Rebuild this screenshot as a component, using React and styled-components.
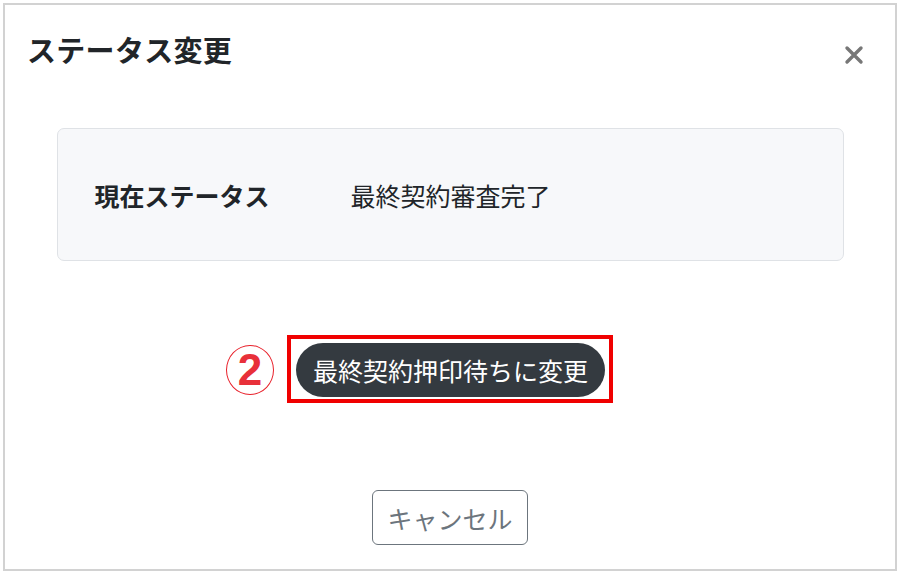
import React from "react";
import styled, { createGlobalStyle } from "styled-components";

const GlobalStyle = createGlobalStyle`
  html, body {
    margin: 0;
    padding: 0;
    background: #fff;
  }
  body {
    font-family: "Noto Sans CJK JP", "Noto Sans", sans-serif;
    color: #212529;
  }
`;

const Page = styled.div`
  width: 901px;
  height: 574px;
  box-sizing: border-box;
  padding: 3px 4px 3px 3px;
`;

const Modal = styled.div`
  height: 100%;
  box-sizing: border-box;
  border: 2px solid #d2d2d2;
  display: flex;
  flex-direction: column;
  align-items: center;
`;

const Header = styled.div`
  align-self: stretch;
  display: flex;
  justify-content: space-between;
  align-items: flex-start;
  padding: 24px 30px 0 22px;
`;

const Title = styled.h1`
  margin: 0;
  font-size: 29px;
  line-height: 40px;
  font-weight: 700;
  color: #212529;
  letter-spacing: 0.3px;
`;

const Close = styled.button`
  border: none;
  background: none;
  padding: 0;
  margin-top: 15px;
  width: 22px;
  height: 22px;
  cursor: pointer;
  display: flex;
  align-items: center;
  justify-content: center;
`;

const StatusBox = styled.div`
  margin-top: 59px;
  width: 787px;
  height: 133px;
  box-sizing: border-box;
  background: #f7f8fa;
  border: 1px solid #dfe2e6;
  border-radius: 7px;
  display: flex;
  align-items: center;
  padding-left: 37px;
  font-size: 25px;
`;

const Label = styled.span`
  width: 256px;
  font-weight: 700;
  color: #212529;
`;

const Value = styled.span`
  color: #212529;
`;

const ActionRow = styled.div`
  margin-top: 74px;
  position: relative;
`;

const Highlight = styled.div`
  border: 4px solid #f00000;
  padding: 4px 4px 2px 5px;
  width: 326px;
  height: 68px;
  box-sizing: border-box;
`;

const Marker = styled.div`
  position: absolute;
  left: -61px;
  top: 10px;
  width: 48px;
  height: 50px;
  box-sizing: border-box;
  border: 1.5px solid #e8202a;
  border-radius: 50%;
  color: #e8303a;
  font-family: "Liberation Sans", Arial, sans-serif;
  font-weight: 700;
  font-size: 44px;
  line-height: 1;
  display: flex;
  align-items: center;
  justify-content: center;
`;

const PillButton = styled.button`
  width: 309px;
  height: 54px;
  border: none;
  border-radius: 27px;
  background: #343a40;
  color: #fff;
  font-family: inherit;
  font-size: 25px;
  padding: 0;
  cursor: pointer;
`;

const CancelButton = styled.button`
  margin-top: 87px;
  width: 156px;
  height: 55px;
  background: #fff;
  border: 1px solid #6c757d;
  border-radius: 6px;
  color: #6c757d;
  font-family: inherit;
  font-size: 25px;
  padding: 0;
  cursor: pointer;
`;

export default function App() {
  return (
    <Page>
      <GlobalStyle />
      <Modal>
        <Header>
          <Title>ステータス変更</Title>
          <Close aria-label="close">
            <svg width="20" height="20" viewBox="0 0 20 20">
              <path d="M3 3L17 17M17 3L3 17" stroke="#777" strokeWidth="3.4" strokeLinecap="round" />
            </svg>
          </Close>
        </Header>
        <StatusBox>
          <Label>現在ステータス</Label>
          <Value>最終契約審査完了</Value>
        </StatusBox>
        <ActionRow>
          <Marker>2</Marker>
          <Highlight>
            <PillButton>最終契約押印待ちに変更</PillButton>
          </Highlight>
        </ActionRow>
        <CancelButton>キャンセル</CancelButton>
      </Modal>
    </Page>
  );
}
